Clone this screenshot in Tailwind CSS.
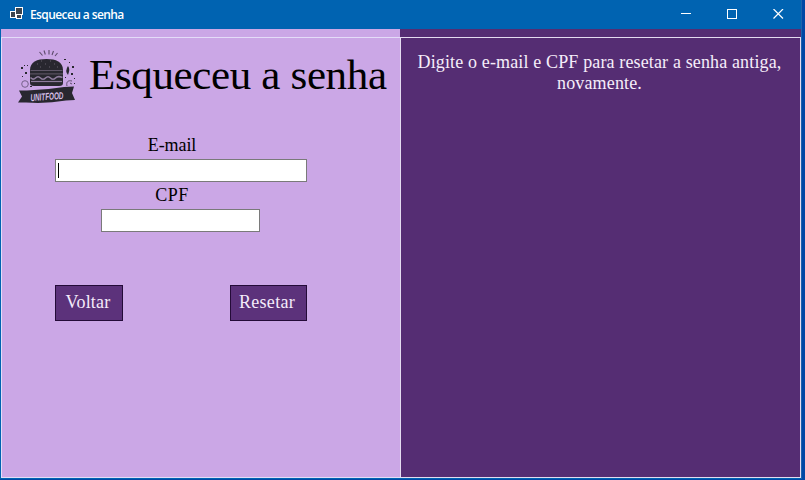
<!DOCTYPE html>
<html lang="pt-BR">
<head>
<meta charset="utf-8">
<title>Esqueceu a senha</title>
<script src="https://cdn.jsdelivr.net/npm/@tailwindcss/browser@4"></script>
</head>
<body class="h-[480px] w-[805px] overflow-hidden bg-[#0047a5] font-['Liberation_Serif',serif]">
<div class="flex h-[479px] w-[802px] flex-col border-r border-[#1d62ad] bg-[#0063b1]">
  <header class="flex h-[29px] shrink-0 items-center text-white">
    <svg class="ml-[9px] size-[16px] shrink-0" viewBox="0 0 16 16" shape-rendering="crispEdges">
      <rect x="1.5" y="4.500" width="5" height="6" fill="#3c444d" stroke="#fff"/>
      <rect x="7.500" y="7.500" width="5" height="4" fill="#3c444d" stroke="#fff"/>
      <rect x="6.500" y="0.500" width="7" height="7" fill="#3c444d" stroke="#fff"/>
    </svg>
    <h1 class="ml-[5px] text-[12px] leading-[16px] font-semibold tracking-[-0.6px] whitespace-nowrap font-['Open_Sans','Noto_Sans',sans-serif]">Esqueceu a senha</h1>
    <div class="ml-auto flex gap-[35px] pr-[17px]">
      <svg class="size-[11px]" viewBox="0 0 11 11"><path d="M0 4.500H10" stroke="#fff"/></svg>
      <svg class="size-[11px]" viewBox="0 0 11 11"><rect x=".5" y=".5" width="9" height="9" fill="none" stroke="#fff"/></svg>
      <svg class="size-[11px]" viewBox="0 0 11 11"><path d="M.5 0L10 9.500M10 0L.5 9.500" stroke="#fff" stroke-width="1.200"/></svg>
    </div>
  </header>
  <main class="flex h-[449px] shrink-0 pl-px">
    <section class="w-[399px] bg-[#cba7e6] pt-[8px]">
      <div class="flex h-[441px] flex-col border-t border-b border-l border-[#e4dcf8]">
        <div class="flex h-[76px] pl-[14px]">
          <svg class="mt-[10px] h-[58px] w-[62px] shrink-0 overflow-visible" viewBox="0 0 62 58" fill="#28272f">
            <g stroke="#5d4b6b" stroke-width="1.100" fill="none">
              <path d="M23.500 4l3 3.500M28 2.500l1.300 4M33 2v4.500M37.500 3L36 7M41.500 5l-2.500 3"/>
              <circle cx="9" cy="36" r="3.300" stroke="#76618a" stroke-width="1"/>
              <path d="M51 38c-1-4 1-6 5-5M54 35l2 1" stroke-width="1"/>
            </g>
            <path d="M14 22C14 14 21 11 30.500 11S47 14 47 22v13c0 2-1 3-4 3H18c-3 0-4-1-4-3z"/>
            <path d="M14.500 22.500h32" stroke="#5f5668" stroke-width="1"/>
            <path d="M14 25.800h33" stroke="#57505f" stroke-width="1.200"/>
            <path d="M14.500 29.500q2.500 3 5 .5t5 0 5 0 5 0 5 0 7-.5" fill="none" stroke="#8d7b9c" stroke-width="1.600"/>
            <path d="M15 33.500h31" stroke="#8d7b9c" stroke-width="1.200"/>
            <path d="M21 16h1M25 13h1M29 16h1M34 13h1M38 16h1M41 19h1M24 19h1M33 19h1" stroke="#65606d"/>
            <path d="M52 18q2.500 3 0 9-3.500-4 0-9z"/>
            <path d="M5 19h2v2H5zM9 24h2v2H9zM8 17h1v1H8zM6 28h1v1H6zM11 17h1v1h-1zM48 11h2v1h-2zM53 14h1v1h-1zM56 18h2v2h-2zM55 25h2v2h-2zM49 29h1v1h-1zM58 30h1v1h-1zM14 38h2v1h-2zM58 35h1v1h-1z"/>
            <path d="M3 42.500L11 42.500Q30 42 48 39L58 38.500 56 45l3 7-9 .5Q30 56 10 54.500L2 54.500l4-6z"/>
            <text x="14.500" y="52" textLength="33" lengthAdjust="spacingAndGlyphs" transform="rotate(-4 31 49)" fill="#d5bfe6" font-family="Liberation Sans" font-size="10" font-weight="bold" font-style="italic">UNITFOOD</text>
          </svg>
          <h2 class="ml-[11px] pt-[12px] text-[43px] leading-[50px] tracking-[-0.35px] whitespace-nowrap text-black">Esqueceu a senha</h2>
        </div>
        <form class="ml-[53px] flex w-[252px] flex-col pt-[21px] text-[18px] leading-[20px] text-black">
          <label class="relative -left-[9px] h-[24px] text-center tracking-[-0.1px]">E-mail</label>
          <div class="flex h-[23px] items-start border border-[#7a7a7a] bg-white pt-[3px] pl-[2px]"><span class="h-[15px] w-px bg-black"></span></div>
          <label class="relative -left-[9px] mt-[3px] h-[24px] text-center tracking-[0.5px]">CPF</label>
          <div class="ml-[46px] h-[23px] w-[159px] border border-[#7a7a7a] bg-white"></div>
          <div class="mt-[53px] flex justify-between text-[#f4eafa]">
            <button type="button" class="h-[36px] w-[68px] border border-[#240b38] bg-[#5c327b] pr-[2px] pb-[2px] text-center tracking-[0.2px]">Voltar</button>
            <button type="button" class="h-[36px] w-[77px] border border-[#240b38] bg-[#5c327b] pr-[3px] pb-[2px] text-center tracking-[0.3px]">Resetar</button>
          </div>
        </form>
      </div>
    </section>
    <section class="w-[401px] bg-[#552d73] pt-[8px]">
      <div class="h-[441px] border border-[#e4dcf0] pt-[14px] text-center text-[18px] leading-[21px] tracking-[0.14px] text-[#f6edfa]">
        <p class="relative -left-px">Digite o e-mail e CPF para resetar a senha antiga,<br>novamente.</p>
      </div>
    </section>
  </main>
</div>
</body>
</html>
